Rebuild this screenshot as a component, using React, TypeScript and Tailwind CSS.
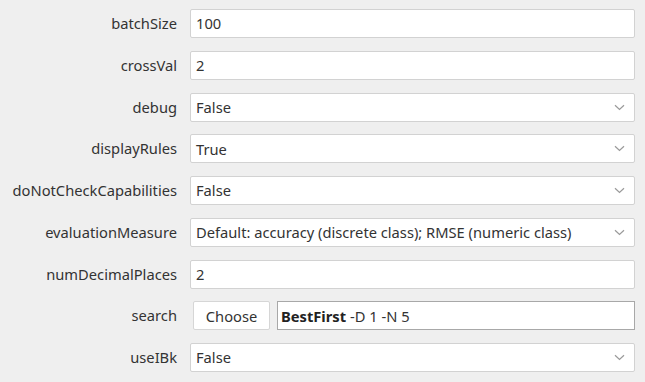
import React from "react";

const Chevron = () => (
  <svg width="11" height="7" viewBox="0 0 11 7" className="shrink-0">
    <path d="M1 1.2 L5.5 5.5 L10 1.2" fill="none" stroke="#9a9a9a" strokeWidth="1.2" />
  </svg>
);

type Row = { label: string; value: string; kind: "text" | "select" | "search" };

const rows: Row[] = [
  { label: "batchSize", value: "100", kind: "text" },
  { label: "crossVal", value: "2", kind: "text" },
  { label: "debug", value: "False", kind: "select" },
  { label: "displayRules", value: "True", kind: "select" },
  { label: "doNotCheckCapabilities", value: "False", kind: "select" },
  { label: "evaluationMeasure", value: "Default: accuracy (discrete class); RMSE (numeric class)", kind: "select" },
  { label: "numDecimalPlaces", value: "2", kind: "text" },
  { label: "search", value: "", kind: "search" },
  { label: "useIBk", value: "False", kind: "select" },
];

export default function App() {
  return (
    <div
      className="w-[645px] h-[382px] bg-[#efefef] text-[#333333] text-[14.7px] pt-[9px]"
      style={{ fontFamily: '"Noto Sans", "Open Sans", sans-serif' }}
    >
      <div className="flex flex-col gap-[12.75px]">
        {rows.map((r) => (
          <div key={r.label} className="flex items-center h-[29px]">
            <div className="w-[178px] text-right pr-[1px] leading-none whitespace-nowrap">{r.label}</div>
            {r.kind === "search" ? (
              <div className="flex items-center ml-[15px] w-[442px] h-[29px]">
                <div className="w-[77px] h-[29px] bg-white border border-[#d6d6d6] rounded-[2px] flex items-center justify-center">
                  Choose
                </div>
                <div className="ml-[7px] flex-1 h-[29px] bg-white border border-[#a8a8a8] flex items-center pl-[3px]">
                  <span className="font-bold text-[#222]">BestFirst</span>
                  <span className="ml-[4px]">-D 1 -N 5</span>
                </div>
              </div>
            ) : (
              <div className="ml-[12px] w-[445px] h-[29px] bg-white border border-[#d2d2d2] rounded-[2px] flex items-center pl-[5px] pr-[9px]">
                <span className="flex-1 whitespace-nowrap">{r.value}</span>
                {r.kind === "select" && <Chevron />}
              </div>
            )}
          </div>
        ))}
      </div>
    </div>
  );
}
